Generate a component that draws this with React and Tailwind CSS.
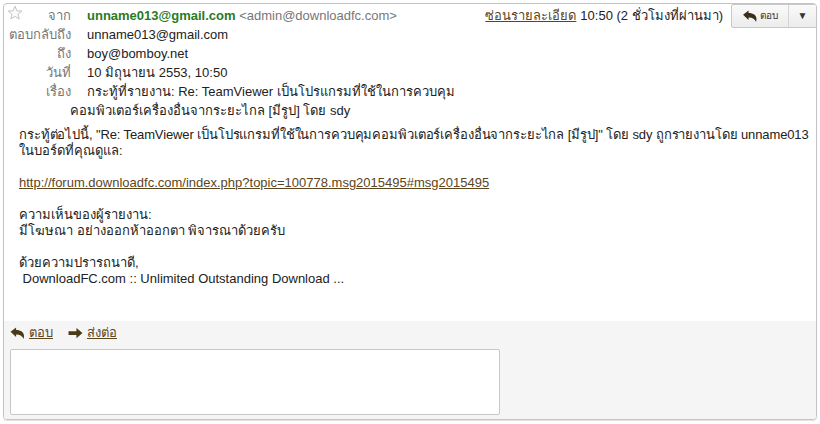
import React from "react";

const font = { fontFamily: '"Liberation Sans", Arial, "Noto Sans", sans-serif' };

function ReplyArrow({ className = "" }) {
  return (
    <svg viewBox="0 0 16 14" className={className} fill="currentColor">
      <path d="M0.5 5.2 L6.5 0.5 L6.5 3.2 C11.5 3.2 15 5.5 15 10 L14.6 13 C13.5 10 11 8 6.5 8 L6.5 10.8 Z" />
    </svg>
  );
}

function ForwardArrow({ className = "" }) {
  return (
    <svg viewBox="0 0 16 14" className={className} fill="currentColor">
      <path d="M9 1 L15.5 6.5 L9 12 L9 8.5 L0.5 8.5 L0.5 4.5 L9 4.5 Z" />
    </svg>
  );
}

function Star() {
  return (
    <svg viewBox="0 0 16 16" className="w-[16px] h-[16px]">
      <path
        d="M8 1.2 L9.9 5.8 L14.8 6.1 L11 9.2 L12.2 14 L8 11.4 L3.8 14 L5 9.2 L1.2 6.1 L6.1 5.8 Z"
        fill="#fafafa"
        stroke="#c4c4c4"
        strokeWidth="1"
        strokeLinejoin="round"
      />
    </svg>
  );
}

function Row({ label, children }) {
  return (
    <div className="flex h-[19px] items-center">
      <div className="w-[67px] text-right text-[#777] shrink-0">{label}</div>
      <div className="pl-[16px] text-[#222] whitespace-nowrap">{children}</div>
    </div>
  );
}

export default function App() {
  return (
    <div className="w-[820px] h-[424px] bg-white p-[3px] text-[13px] leading-[16px]" style={font}>
      <div className="relative h-[417px] border border-[#c4c4c4] rounded-[4px] flex flex-col overflow-hidden shadow-[0_1px_1px_rgba(0,0,0,0.12)]">
        {/* header */}
        <div className="relative pt-[2px]">
          <div className="absolute left-[3px] top-[1px]">
            <Star />
          </div>
          <Row label="จาก">
            <span className="font-bold text-[#2a7a22]">unname013@gmail.com</span>{" "}
            <span className="text-[#777]">&lt;admin@downloadfc.com&gt;</span>
          </Row>
          <Row label="ตอบกลับถึง">unname013@gmail.com</Row>
          <Row label="ถึง">boy@bomboy.net</Row>
          <Row label="วันที่">10 มิถุนายน 2553, 10:50</Row>
          <Row label="เรื่อง">กระทู้ที่รายงาน: Re: TeamViewer เป็นโปรแกรมที่ใช้ในการควบคุม</Row>
          <div className="h-[19px] flex items-center pl-[66px] text-[#222]">
            คอมพิวเตอร์เครื่องอื่นจากระยะไกล [มีรูป] โดย sdy
          </div>

          {/* right side */}
          <div className="absolute right-[-1px] top-0 flex items-start">
            <div className="h-[23px] flex items-center mr-[8px] whitespace-nowrap text-[#222]">
              <span className="underline text-[#5c4521] mr-[4px]">ซ่อนรายละเอียด</span>
              <span>10:50 (2 ชั่วโมงที่ผ่านมา)</span>
            </div>
            <div className="flex h-[24px] border border-[#c8c8c8] rounded-[2px] bg-gradient-to-b from-[#fafafa] to-[#ececec]">
              <div className="w-[57px] flex items-center justify-center gap-[2px] border-r border-[#d4d4d4] text-[#3a2f1c]">
                <ReplyArrow className="w-[16px] h-[13px]" />
                <span className="text-[10px] text-[#333]">ตอบ</span>
              </div>
              <div className="w-[27px] flex items-center justify-center text-[#333] text-[10px]">▼</div>
            </div>
          </div>
        </div>

        {/* body */}
        <div className="pl-[15px] pt-[7px] pb-[34px] text-[#222] whitespace-nowrap">
          <div className="tracking-[-0.12px]">
            กระทู้ต่อไปนี้, "Re: TeamViewer เป็นโปรแกรมที่ใช้ในการควบคุมคอมพิวเตอร์เครื่องอื่นจากระยะไกล [มีรูป]" โดย sdy ถูกรายงานโดย unname013
          </div>
          <div>ในบอร์ดที่คุณดูแล:</div>
          <div className="h-[16px]" />
          <div>
            <span className="underline text-[#5c4521]">
              http://forum.downloadfc.com/index.php?topic=100778.msg2015495#msg2015495
            </span>
          </div>
          <div className="h-[16px]" />
          <div>ความเห็นของผู้รายงาน:</div>
          <div>มีโฆษณา อย่างออกห้าออกตา พิจารณาด้วยครับ</div>
          <div className="h-[16px]" />
          <div>ด้วยความปรารถนาดี,</div>
          <div>&nbsp;DownloadFC.com :: Unlimited Outstanding Download ...</div>
        </div>

        {/* footer */}
        <div className="flex-1 bg-[#f5f5f5] pt-[4px] pl-[6px]">
          <div className="flex items-center h-[16px] text-[#5c4521]">
            <ReplyArrow className="w-[15px] h-[13px] text-[#4a3a1a]" />
            <span className="underline ml-[4px]">ตอบ</span>
            <ForwardArrow className="w-[15px] h-[13px] ml-[15px] text-[#4a3a1a]" />
            <span className="underline ml-[4px]">ส่งต่อ</span>
          </div>
          <div className="mt-[8px] w-[490px] h-[66px] bg-white border border-[#c8c8c8] rounded-[2px]" />
        </div>
      </div>
    </div>
  );
}
